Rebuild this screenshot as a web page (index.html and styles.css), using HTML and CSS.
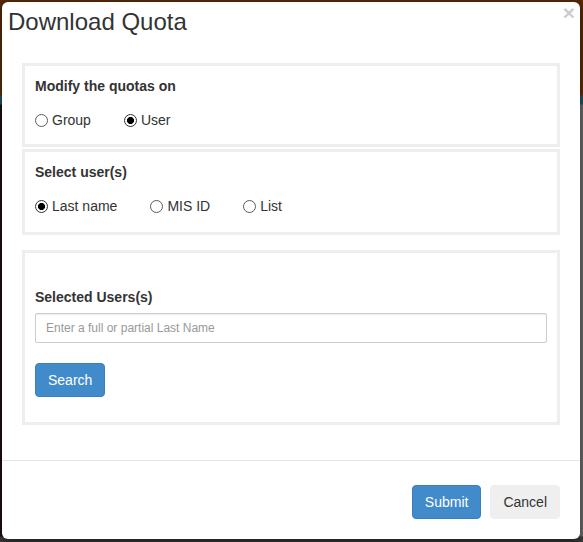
FILE: index.html
```html
<!DOCTYPE html>
<html lang="en">
<head>
<meta charset="utf-8">
<title>Download Quota</title>
<link rel="stylesheet" href="styles.css">
</head>
<body>
<div class="modal">
  <div class="modal-header">
    <h4 class="modal-title">Download Quota</h4>
    <button class="close" type="button" aria-label="Close">×</button>
  </div>
  <div class="modal-body">
    <div class="panel panel-mode">
      <div class="panel-label">Modify the quotas on</div>
      <div class="radio-row">
        <label class="radio"><input type="radio" name="mode" value="group"> Group</label>
        <label class="radio"><input type="radio" name="mode" value="user" checked> User</label>
      </div>
    </div>
    <div class="panel panel-who">
      <div class="panel-label">Select user(s)</div>
      <div class="radio-row">
        <label class="radio"><input type="radio" name="who" value="last" checked> Last name</label>
        <label class="radio"><input type="radio" name="who" value="mis"> MIS ID</label>
        <label class="radio"><input type="radio" name="who" value="list"> List</label>
      </div>
    </div>
    <div class="panel panel-users">
      <label class="panel-label field-label" for="lastname">Selected Users(s)</label>
      <input id="lastname" class="text-input" type="text" placeholder="Enter a full or partial Last Name">
      <div class="search-row">
        <button class="btn btn-primary" type="button">Search</button>
      </div>
    </div>
  </div>
  <div class="modal-footer">
    <button class="btn btn-primary" type="button">Submit</button>
    <button class="btn btn-default" type="button">Cancel</button>
  </div>
</div>
</body>
</html>
```

FILE: styles.css
```css
* {
  box-sizing: border-box;
}

html,
body {
  margin: 0;
  height: 100%;
}

body {
  padding: 2px 3px 3px 2px;
  font-family: "Liberation Sans", Arial, sans-serif;
  font-size: 14px;
  line-height: 20px;
  color: #333;
  background:
    linear-gradient(to bottom, #552806 0, #5e2f08 95px, #1e5662 96px, #1e5662 104px, rgba(0,0,0,0) 105px),
    linear-gradient(to bottom, rgba(0,0,0,0) 0, rgba(0,0,0,0) 536px, #3b3838 537px),
    linear-gradient(to right, #1c0f14 0, #1c0f14 50%, #6a6a6a 50%, #6a6a6a 100%);
}

.modal {
  width: 578px;
  height: 537px;
  background: #fff;
  border-radius: 6px;
  display: flex;
  flex-direction: column;
  box-shadow: 0 3px 9px rgba(0, 0, 0, 0.5);
}

.modal-header {
  display: flex;
  justify-content: space-between;
  align-items: flex-start;
  height: 61px;
  padding: 6.5px 5px 0 6px;
}

.modal-title {
  margin: 0;
  font-size: 24px;
  line-height: 26.4px;
  font-weight: 400;
  color: #333;
}

.close {
  margin-top: -7px;
  padding: 0;
  border: 0;
  background: none;
  font-family: "Liberation Sans", Arial, sans-serif;
  font-size: 21px;
  font-weight: 700;
  line-height: 1;
  color: #000;
  opacity: 0.2;
  cursor: pointer;
}

.modal-body {
  padding: 0 20px;
}

.panel {
  border: 3px solid #eee;
  padding: 10px 10px;
}

.panel-mode {
  padding-bottom: 14px;
}

.panel-who {
  margin-top: 2px;
  padding-bottom: 16px;
}

.panel-users {
  margin-top: 15px;
  padding: 34px 10px 25px;
}

.panel-label {
  display: block;
  font-weight: 700;
  color: #333;
}

.field-label {
  margin-bottom: 6px;
}

.radio-row {
  display: flex;
  gap: 33px;
  margin-top: 14px;
}

.radio {
  display: flex;
  align-items: center;
  gap: 4px;
  cursor: pointer;
}

.radio input {
  appearance: none;
  -webkit-appearance: none;
  width: 13px;
  height: 13px;
  margin: 0;
  border: 1px solid #5a5a5a;
  border-radius: 50%;
  background: #fff;
}

.radio input:checked {
  background: radial-gradient(circle, #000 0, #000 3.3px, #fff 3.8px);
  border-color: #333;
}

.text-input {
  display: block;
  width: 100%;
  height: 30px;
  padding: 5px 10px;
  border: 1px solid #ccc;
  border-radius: 2px;
  box-shadow: inset 0 1px 1px rgba(0, 0, 0, 0.075);
  font-family: "Liberation Sans", Arial, sans-serif;
  font-size: 12px;
  line-height: 18px;
  color: #555;
}

.text-input::placeholder {
  color: #999;
}

.search-row {
  margin-top: 20px;
}

.btn {
  display: inline-block;
  padding: 6px 12px;
  border: 1px solid transparent;
  border-radius: 4px;
  font-family: "Liberation Sans", Arial, sans-serif;
  font-size: 14px;
  line-height: 20px;
  cursor: pointer;
}

.btn-primary {
  color: #fff;
  background: #428bca;
  border-color: #3a80bf;
}

.btn-default {
  color: #333;
  background: #efefef;
  border-color: #efefef;
}

.modal-footer {
  margin-top: auto;
  display: flex;
  justify-content: flex-end;
  gap: 9px;
  padding: 24px 20px 20px;
  border-top: 1px solid #e5e5e5;
}
```
